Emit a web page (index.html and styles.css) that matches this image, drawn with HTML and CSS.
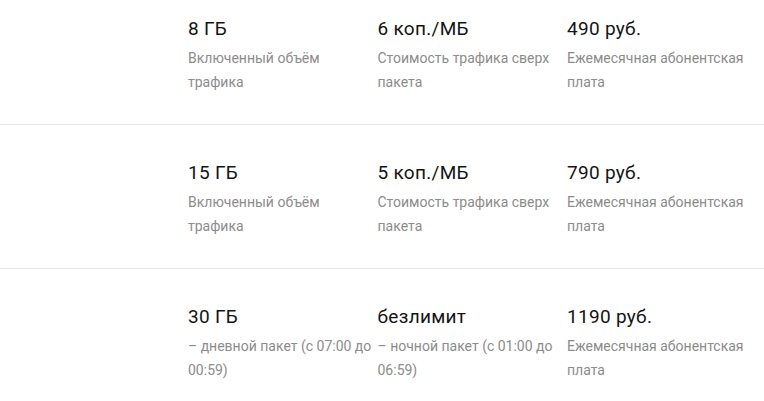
FILE: index.html
```html
<!DOCTYPE html>
<html lang="ru">
<head>
<meta charset="utf-8">
<link rel="stylesheet" href="styles.css">
</head>
<body>
<div class="list">
  <div class="row first">
    <div class="cell"><div class="val">8 ГБ</div><div class="desc">Включенный объём трафика</div></div>
    <div class="cell"><div class="val">6 коп./МБ</div><div class="desc">Стоимость трафика сверх пакета</div></div>
    <div class="cell"><div class="val">490 руб.</div><div class="desc">Ежемесячная абонентская плата</div></div>
  </div>
  <div class="row">
    <div class="cell"><div class="val">15 ГБ</div><div class="desc">Включенный объём трафика</div></div>
    <div class="cell"><div class="val">5 коп./МБ</div><div class="desc">Стоимость трафика сверх пакета</div></div>
    <div class="cell"><div class="val">790 руб.</div><div class="desc">Ежемесячная абонентская плата</div></div>
  </div>
  <div class="row last">
    <div class="cell"><div class="val">30 ГБ</div><div class="desc">– дневной пакет (с 07:00 до 00:59)</div></div>
    <div class="cell"><div class="val">безлимит</div><div class="desc">– ночной пакет (с 01:00 до 06:59)</div></div>
    <div class="cell"><div class="val">1190 руб.</div><div class="desc">Ежемесячная абонентская плата</div></div>
  </div>
</div>
</body>
</html>
```
FILE: styles.css
```css
html, body {
  margin: 0;
  padding: 0;
  background: #fff;
  overflow: hidden;
}
body {
  font-family: Roboto, "Liberation Sans", sans-serif;
}
.list {
  margin-top: -19px;
}
.row {
  display: flex;
  padding: 36px 0 30px 188px;
  border-bottom: 1px solid #e6e6e6;
}
.row.last {
  border-bottom: none;
}
.cell {
  width: 189.5px;
  padding-right: 4px;
  box-sizing: border-box;
}
.val {
  font-size: 19px;
  letter-spacing: 0.3px;
  line-height: 24px;
  color: #141414;
}
.desc {
  margin-top: 5px;
  font-size: 14px;
  line-height: 24px;
  color: #8c8c8c;
}
```
